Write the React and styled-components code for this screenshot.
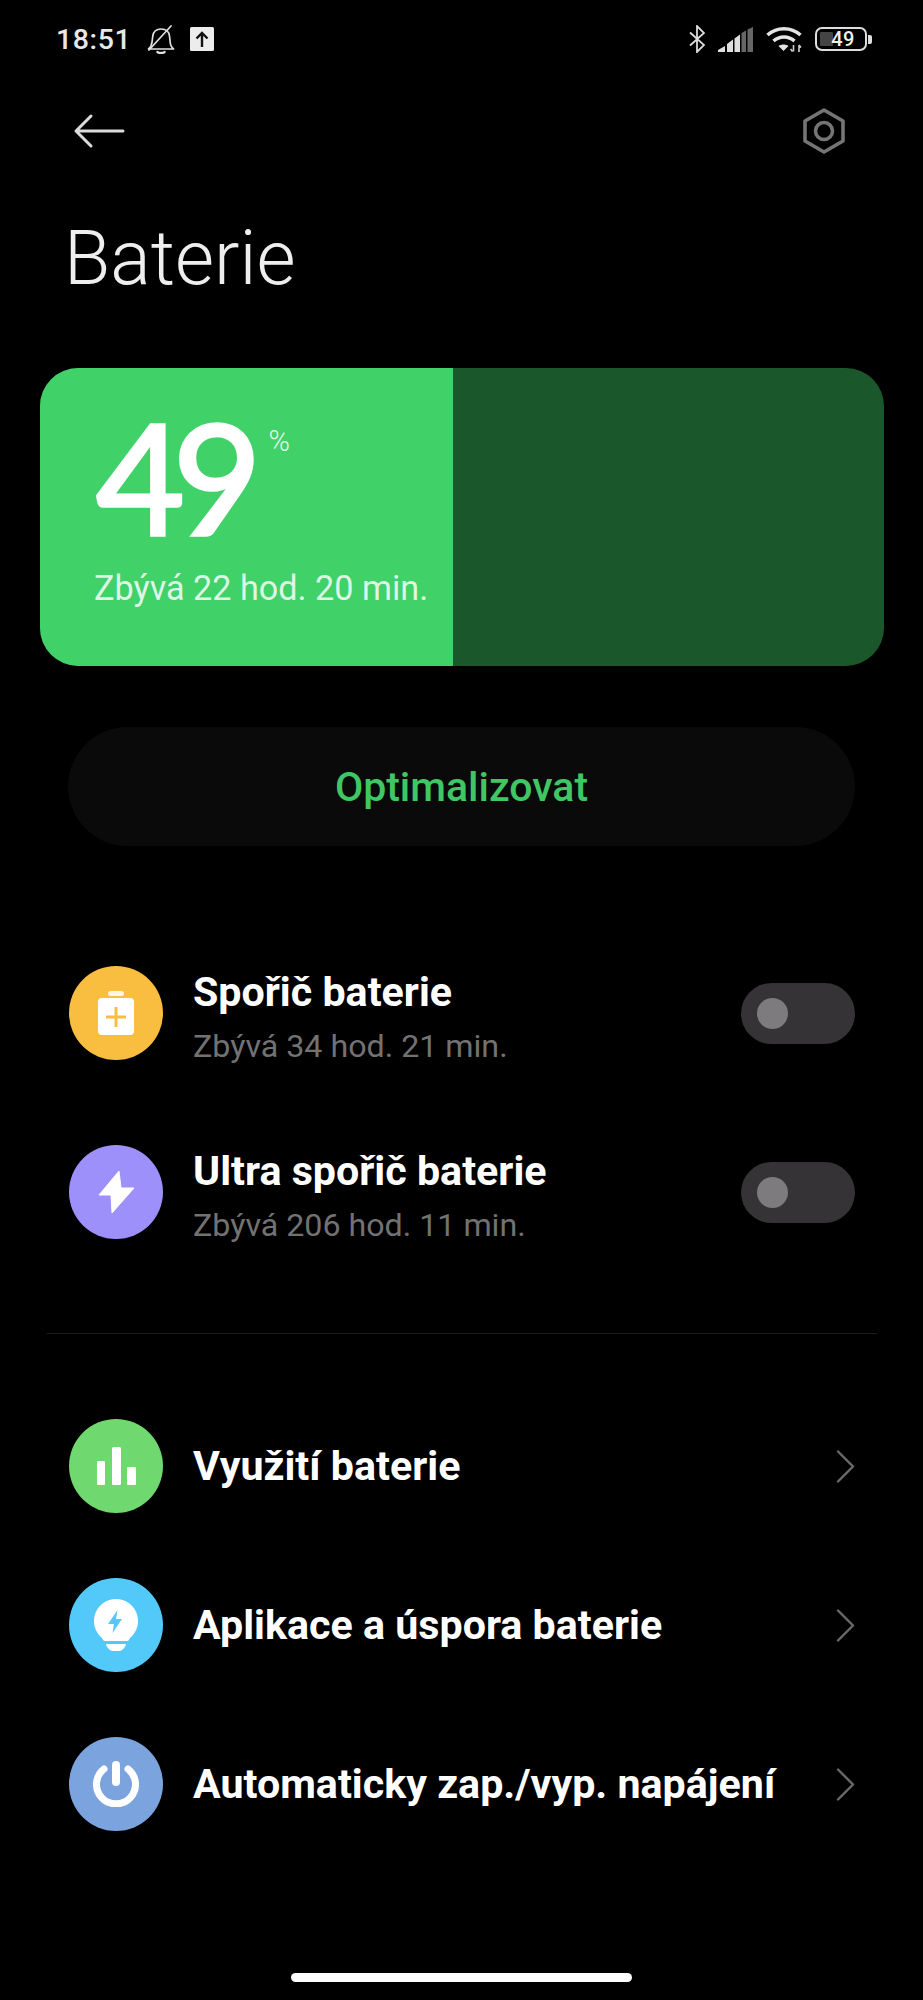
import React from "react";
import styled, { createGlobalStyle } from "styled-components";

const Global = createGlobalStyle`
  html, body { margin: 0; padding: 0; background: #000; }
  body { font-family: Roboto, "Liberation Sans", sans-serif; }
`;

const Page = styled.div`
  width: 923px;
  height: 2000px;
  background: #000;
  color: #fff;
  display: flex;
  flex-direction: column;
  overflow: hidden;
  position: relative;
`;

const StatusBar = styled.div`
  height: 36px;
  margin-top: 21px;
  margin-bottom: 1px;
  padding: 0 51px 0 56px;
  display: flex;
  align-items: center;
  justify-content: space-between;
`;

const StatusGroup = styled.div`
  display: flex;
  align-items: center;
  gap: ${(p) => p.$gap}px;
`;

const Clock = styled.span`
  font-size: 28.5px;
  font-weight: 500;
  color: #e8e8e8;
  letter-spacing: 0.6px;
  margin-right: 1px;
`;

const ActionBar = styled.div`
  height: 46px;
  margin-top: 50px;
  padding: 0 78px 0 73px;
  display: flex;
  align-items: center;
  justify-content: space-between;
`;

const Title = styled.h1`
  margin: 61px 0 0 64px;
  font-size: 75.5px;
  line-height: 86px;
  font-weight: 300;
  color: #eee;
`;

const Card = styled.div`
  margin: 67px 39px 0 40px;
  height: 298px;
  border-radius: 38px;
  overflow: hidden;
  background: #1a572a;
  display: flex;
`;

const CardFill = styled.div`
  width: 413px;
  background: #40d168;
  padding: 38px 0 0 54px;
  box-sizing: border-box;
`;

const BigRow = styled.div`
  display: flex;
  align-items: flex-start;
  height: 148px;
`;

const BigNumber = styled.span`
  font-family: Lato, Roboto, sans-serif;
  font-size: 153px;
  line-height: 140px;
  font-weight: 400;
  -webkit-text-stroke: 3.5px #fff;
  letter-spacing: -12px;
  margin-left: 2px;
  color: #fff;
`;

const Percent = styled.span`
  font-size: 29px;
  line-height: 30px;
  font-weight: 300;
  color: #e3f8e9;
  margin: 20px 0 0 19px;
`;

const Remaining = styled.div`
  font-size: 34.2px;
  line-height: 40px;
  color: #dcf7e4;
  margin-top: 14px;
`;

const OptimizeButton = styled.div`
  margin: 61px 68px 0;
  height: 119px;
  border-radius: 60px;
  background: #0a0a0a;
  display: flex;
  align-items: center;
  justify-content: center;
  font-size: 41px;
  font-weight: 500;
  color: #40c764;
`;

const Section = styled.div`
  margin-top: ${(p) => p.$top}px;
  padding: 0 68px 0 69px;
  display: flex;
  flex-direction: column;
  gap: ${(p) => p.$gap}px;
`;

const Row = styled.div`
  display: flex;
  align-items: center;
  height: 94px;
`;

const IconCircle = styled.div`
  width: 94px;
  height: 94px;
  border-radius: 50%;
  background: ${(p) => p.$bg};
  display: flex;
  align-items: center;
  justify-content: center;
  flex: none;
`;

const RowText = styled.div`
  margin-left: 30px;
  padding-top: ${(p) => (p.$two ? 7 : 0)}px;
  flex: 1;
  min-width: 0;
`;

const RowTitle = styled.div`
  font-size: 41.2px;
  line-height: 48px;
  font-weight: 700;
  color: #fff;
`;

const RowSub = styled.div`
  font-size: 32.2px;
  line-height: 38px;
  margin-top: 11px;
  color: #727272;
`;

const Switch = styled.div`
  width: 114px;
  height: 61px;
  border-radius: 31px;
  background: #353335;
  display: flex;
  align-items: center;
  padding-left: 16px;
  box-sizing: border-box;
  flex: none;
`;

const Knob = styled.div`
  width: 31px;
  height: 31px;
  border-radius: 50%;
  background: #7d7b7d;
`;

const Divider = styled.div`
  height: 1px;
  margin: 94px 46px 0 47px;
  background: #1c1c1c;
`;

const HomeBar = styled.div`
  width: 341px;
  height: 9px;
  border-radius: 5px;
  background: #fff;
  position: absolute;
  left: 291px;
  top: 1973px;
`;

const Bell = () => (
  <svg width="28" height="29" viewBox="0 0 28 29" fill="none" stroke="#e0e0e0" strokeWidth="1.7" strokeLinecap="round" strokeLinejoin="round">
    <path d="M1.500 24h25c-2.500-2-3.200-4-3.400-7.500L22.500 11c-.5-4.500-4-7-8.500-7S6.500 6.500 5.800 11l-.7 5.500C4.800 20 4 22 1.500 24z" />
    <path d="M2 25L24 1" />
    <path d="M10.500 27c1 1.300 6 1.300 7 0" strokeWidth="2.400" />
  </svg>
);

const Upload = () => (
  <svg width="24" height="24" viewBox="0 0 24 24">
    <rect width="24" height="24" rx="1.500" fill="#ececec" />
    <path d="M12 20V7M6.500 11.500L12 6l5.500 5.500" stroke="#111" strokeWidth="2.400" fill="none" />
  </svg>
);

const Bluetooth = () => (
  <svg width="16" height="28" viewBox="0 0 16 28" fill="none" stroke="#dcdcdc" strokeWidth="1.800">
    <path d="M1 7.500l14 12.500L8 27V1l7 7L1 20.500" />
  </svg>
);

const Signal = () => (
  <svg width="35" height="25" viewBox="0 0 35 25">
    <path d="M0 25v-2l7-4v6zM9 25v-8l6-4.500V25zM16.500 25V11.500l5.500-4V25z" fill="#e0e0e0" />
    <path d="M23.500 25V6l4.500-2.500V25zM29.500 25V2.500L35 0v25z" fill="#666" />
  </svg>
);

const Wifi = () => (
  <svg width="36" height="26" viewBox="0 0 36 26" fill="none" stroke="#e4e4e4" strokeWidth="3.500">
    <path d="M1.500 9C11 .5 25 .5 34.500 9" />
    <path d="M7.500 15c6-5.500 15-5.500 21 0" />
    <path d="M17.500 25l-5-5c3-2 7-2 10 0z" fill="#e4e4e4" stroke="none" />
    <path d="M27.500 19v6.500M26.500 25.500l-2-2.500M33 26v-7M33 19l2 2.500" stroke="#ccc" strokeWidth="1.600" />
  </svg>
);

const BatteryOuter = styled.div`
  width: 48px;
  height: 20px;
  border: 2.5px solid #dedede;
  border-radius: 7px;
  position: relative;
  display: flex;
  align-items: center;
  justify-content: center;
  font-size: 20px;
  font-weight: 500;
  color: #f0f0f0;
`;

const BatteryCharge = styled.div`
  position: absolute;
  left: 3px;
  top: 3px;
  bottom: 3px;
  width: 13px;
  background: #444;
  border-radius: 1px;
`;

const BatteryLabel = styled.span`
  position: relative;
  margin-left: 4px;
  letter-spacing: 0.4px;
`;

const BatteryTip = styled.div`
  width: 4px;
  height: 9px;
  background: #dedede;
  border-radius: 0 2px 2px 0;
  margin-left: 1px;
`;

const BatteryWrap = styled.div`
  display: flex;
  align-items: center;
`;

const BackArrow = () => (
  <svg width="52" height="36" viewBox="0 0 52 36" fill="none" stroke="#dcdcdc" strokeWidth="3" strokeLinecap="round" strokeLinejoin="round">
    <path d="M3 18h47M18 3L3 18l15 15" />
  </svg>
);

const Hex = () => (
  <svg width="42" height="46" viewBox="0 0 42 46" fill="none" stroke="#757575" strokeWidth="3.600" strokeLinejoin="round">
    <path d="M21 2l19 11v20L21 44 2 33V13z" />
    <circle cx="21" cy="23" r="8.500" />
  </svg>
);

const Chevron = () => (
  <svg width="19" height="33" viewBox="0 0 19 33" fill="none" stroke="#6a6a6a" strokeWidth="2.400" strokeLinecap="round" strokeLinejoin="round">
    <path d="M2 1.500L17 16.500 2 31.500" />
  </svg>
);

const SaverIcon = () => (
  <svg width="36" height="44" viewBox="0 0 36 44">
    <rect x="10" y="0" width="16" height="5" rx="2.500" fill="#fff" opacity="0.85" />
    <rect x="0" y="7" width="36" height="37" rx="4" fill="#fff" />
    <path d="M18 16v20M8 26h20" stroke="#f9bd3f" strokeWidth="3" />
  </svg>
);

const BoltIcon = () => (
  <svg width="37" height="44" viewBox="0 0 37 44">
    <path d="M21 1L1 25h12l1 18 22-25H23z" fill="#fff" stroke="#fff" strokeWidth="1" strokeLinejoin="round" />
  </svg>
);

const BarsIcon = () => (
  <svg width="39" height="38" viewBox="0 0 39 38">
    <rect x="0" y="14" width="8" height="24" rx="1" fill="#fff" />
    <rect x="15" y="0" width="9" height="38" rx="1.500" fill="#fff" />
    <rect x="30" y="20" width="9" height="18" rx="1" fill="#fff" />
  </svg>
);

const BulbIcon = () => (
  <svg width="44" height="52" viewBox="0 0 44 52">
    <path d="M22 0a22 22 0 0 1 14 39c-1 1-1 3-3 3H11c-2 0-2-2-3-3A22 22 0 0 1 22 0z" fill="#fff" />
    <path d="M12 45h20c-1 4-4 7-7 7h-6c-3 0-6-3-7-7z" fill="#fff" />
    <path d="M23.500 11L14 25h6l-1.500 9L28 20h-6z" fill="#52c9f9" />
  </svg>
);

const PowerIcon = () => (
  <svg width="46" height="46" viewBox="0 0 46 46" fill="none" stroke="#fff" strokeLinecap="round">
    <path d="M11 8a19.500 19.500 0 1 0 24 0" strokeWidth="7" />
    <path d="M23 4v17" strokeWidth="8" />
  </svg>
);

const Toggle = () => (
  <Switch>
    <Knob />
  </Switch>
);

export default function App() {
  return (
    <Page>
      <Global />
      <StatusBar>
        <StatusGroup $gap={15}>
          <Clock>18:51</Clock>
          <Bell />
          <Upload />
        </StatusGroup>
        <StatusGroup $gap={13}>
          <Bluetooth />
          <Signal />
          <Wifi />
          <BatteryWrap>
            <BatteryOuter>
              <BatteryCharge />
              <BatteryLabel>49</BatteryLabel>
            </BatteryOuter>
            <BatteryTip />
          </BatteryWrap>
        </StatusGroup>
      </StatusBar>
      <ActionBar>
        <BackArrow />
        <Hex />
      </ActionBar>
      <Title>Baterie</Title>
      <Card>
        <CardFill>
          <BigRow>
            <BigNumber>49</BigNumber>
            <Percent>%</Percent>
          </BigRow>
          <Remaining>Zbývá 22 hod. 20 min.</Remaining>
        </CardFill>
      </Card>
      <OptimizeButton>Optimalizovat</OptimizeButton>
      <Section $top={120} $gap={85}>
        <Row>
          <IconCircle $bg="#f9bd3f"><SaverIcon /></IconCircle>
          <RowText $two>
            <RowTitle>Spořič baterie</RowTitle>
            <RowSub>Zbývá 34 hod. 21 min.</RowSub>
          </RowText>
          <Toggle />
        </Row>
        <Row>
          <IconCircle $bg="#9d90fb"><BoltIcon /></IconCircle>
          <RowText $two>
            <RowTitle>Ultra spořič baterie</RowTitle>
            <RowSub>Zbývá 206 hod. 11 min.</RowSub>
          </RowText>
          <Toggle />
        </Row>
      </Section>
      <Divider />
      <Section $top={85} $gap={65}>
        <Row>
          <IconCircle $bg="#6fd86f"><BarsIcon /></IconCircle>
          <RowText><RowTitle>Využití baterie</RowTitle></RowText>
          <Chevron />
        </Row>
        <Row>
          <IconCircle $bg="#52c9f9"><BulbIcon /></IconCircle>
          <RowText><RowTitle>Aplikace a úspora baterie</RowTitle></RowText>
          <Chevron />
        </Row>
        <Row>
          <IconCircle $bg="#7ba4de"><PowerIcon /></IconCircle>
          <RowText><RowTitle>Automaticky zap./vyp. napájení</RowTitle></RowText>
          <Chevron />
        </Row>
      </Section>
      <HomeBar />
    </Page>
  );
}
